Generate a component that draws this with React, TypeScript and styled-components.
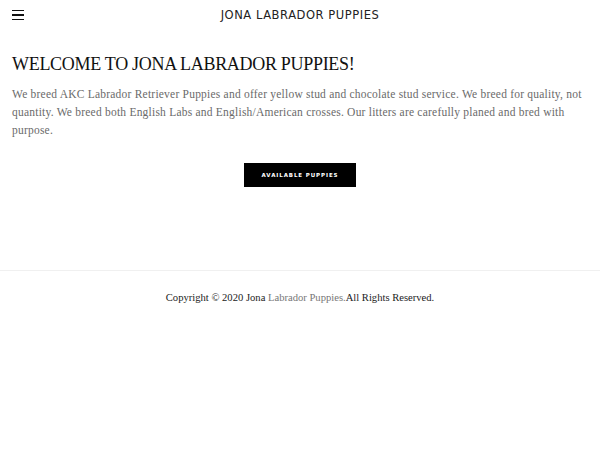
import React from "react";
import styled, { createGlobalStyle } from "styled-components";

const Global = createGlobalStyle`
  html, body { margin: 0; padding: 0; background: #fff; }
  body { font-family: "Liberation Serif", serif; }
`;

const Header = styled.header`
  height: 30px;
  display: flex;
  align-items: center;
  padding: 0 12px;
`;

const Burger = styled.button`
  width: 12px;
  height: 11px;
  padding: 0;
  border: 0;
  background: none;
  display: flex;
  flex-direction: column;
  justify-content: space-between;
  cursor: pointer;
  span { display: block; height: 1.3px; background: #111; }
`;

const Brand = styled.div`
  flex: 1;
  text-align: center;
  margin-right: 12px;
  font-family: "DejaVu Sans", sans-serif;
  font-size: 11.5px;
  letter-spacing: 0.55px;
  color: #222;
`;

const Main = styled.main`
  padding: 22px 12px 0;
`;

const Title = styled.h1`
  margin: 0;
  font-family: "Liberation Serif", serif;
  font-weight: 400;
  font-size: 18px;
  letter-spacing: -0.3px;
  line-height: 24px;
  color: #111;
`;

const Text = styled.p`
  margin: 9px 0 0;
  font-family: "Liberation Serif", serif;
  font-size: 11.5px;
  letter-spacing: 0.22px;
  line-height: 18px;
  color: #6a6a6a;
`;

const Center = styled.div`
  display: flex;
  justify-content: center;
  padding-top: 24px;
`;

const Button = styled.a`
  width: 112px;
  height: 24px;
  background: #000;
  color: #fff;
  display: flex;
  align-items: center;
  justify-content: center;
  font-family: "DejaVu Sans", sans-serif;
  font-size: 5.5px;
  font-weight: 700;
  letter-spacing: 0.9px;
  text-decoration: none;
`;

const Footer = styled.footer`
  margin-top: 83px;
  border-top: 1px solid #f0f0f0;
  padding-top: 21px;
  text-align: center;
  font-family: "Liberation Serif", serif;
  font-size: 10.6px;
  color: #222;
  span { color: #777; }
`;

export default function App() {
  return (
    <>
      <Global />
      <Header>
        <Burger aria-label="menu">
          <span />
          <span />
          <span />
        </Burger>
        <Brand>JONA LABRADOR PUPPIES</Brand>
      </Header>
      <Main>
        <Title>WELCOME TO JONA LABRADOR PUPPIES!</Title>
        <Text>
          We breed AKC Labrador Retriever Puppies and offer yellow stud and chocolate stud service. We breed for quality, not quantity. We breed both English Labs and English/American crosses. Our litters are carefully planed and bred with purpose.
        </Text>
        <Center>
          <Button href="#">AVAILABLE PUPPIES</Button>
        </Center>
      </Main>
      <Footer>
        Copyright © 2020 Jona <span>Labrador Puppies.</span>All Rights Reserved.
      </Footer>
    </>
  );
}
